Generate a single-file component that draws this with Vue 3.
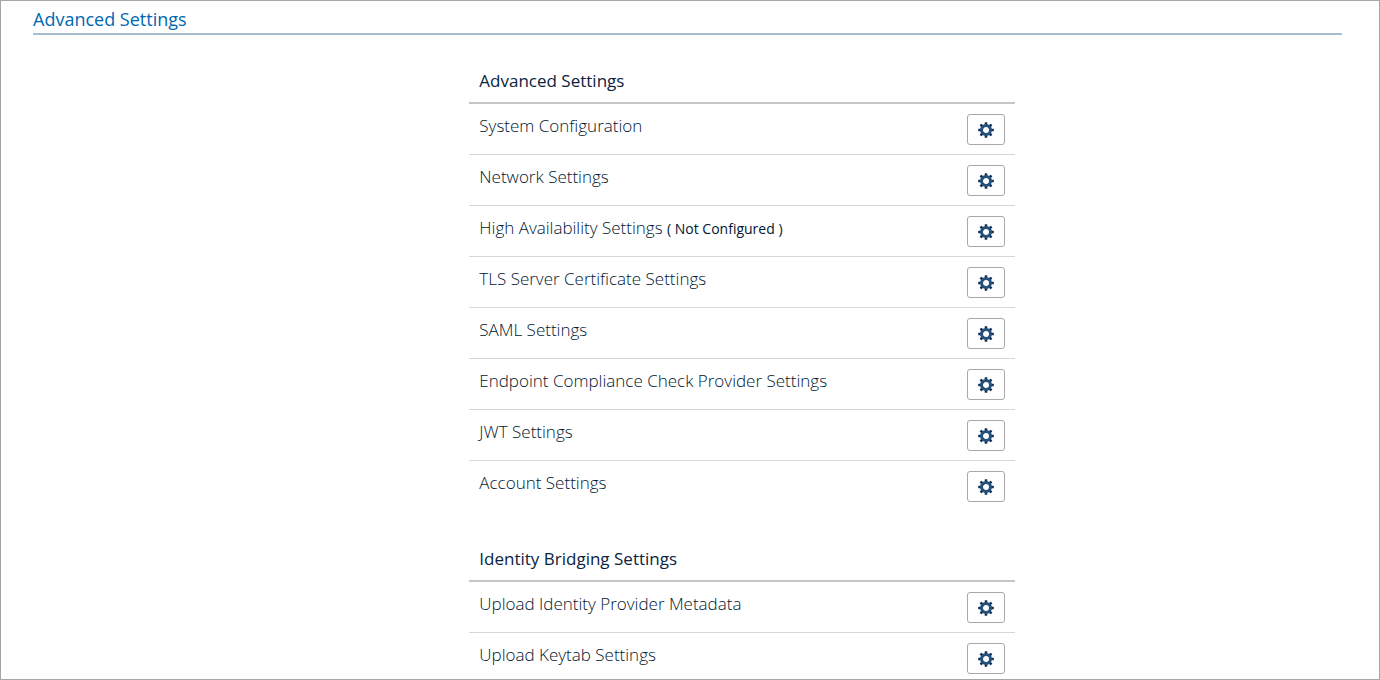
<script setup>
const groups = [
  {
    title: 'Advanced Settings',
    items: [
      { name: 'System Configuration' },
      { name: 'Network Settings' },
      { name: 'High Availability Settings', note: '( Not Configured )' },
      { name: 'TLS Server Certificate Settings' },
      { name: 'SAML Settings' },
      { name: 'Endpoint Compliance Check Provider Settings' },
      { name: 'JWT Settings' },
      { name: 'Account Settings' },
    ],
  },
  {
    title: 'Identity Bridging Settings',
    items: [{ name: 'Upload Identity Provider Metadata' }, { name: 'Upload Keytab Settings' }],
  },
]
const teeth = [0, 45, 90, 135, 180, 225, 270, 315]
</script>

<template>
  <main class="page">
    <h1 class="page-title">Advanced Settings</h1>
    <div class="content">
      <section v-for="group in groups" :key="group.title" class="group">
        <h2 class="group-title">{{ group.title }}</h2>
        <ul class="list">
          <li v-for="item in group.items" :key="item.name" class="row">
            <span class="name">{{ item.name }} <span v-if="item.note" class="note">{{ item.note }}</span></span>
            <button type="button" class="gear" :aria-label="item.name">
              <svg viewBox="0 0 16 16" width="16" height="16" aria-hidden="true">
                <rect v-for="a in teeth" :key="a" x="6.7" y="0.2" width="2.6" height="3.4" rx="0.5" :transform="`rotate(${a} 8 8)`" fill="#12304f" />
                <circle cx="8" cy="8" r="4.5" fill="none" stroke="#24517c" stroke-width="3" />
              </svg>
            </button>
          </li>
        </ul>
      </section>
    </div>
  </main>
</template>

<style>
body {
  background: #fff;
}
</style>

<style scoped>
.page {
  box-sizing: border-box;
  height: 100vh;
  overflow: hidden;
  padding: 0 37px 0 32px;
  border: 1px solid #a6a6a6;
  font-family: "Open Sans", "Noto Sans", sans-serif;
  color: #0a2340;
}
.page-title {
  margin: 0;
  padding: 6px 0 1px;
  border-bottom: 2px solid #a9bccb;
  font-size: 18px;
  line-height: 25px;
  font-weight: 400;
  color: #0068b3;
}
.content {
  width: calc(100% * 5 / 12);
  margin: 35px 0 0 calc(100% / 3);
}
.group {
  margin-bottom: 37px;
}
.group-title {
  margin: 0;
  padding: 0 10px 10px;
  border-bottom: 2px solid #c4c6c8;
  font-size: 17px;
  line-height: 22px;
  font-weight: 400;
}
.list {
  margin: 0;
  padding: 0;
  list-style: none;
}
.row {
  display: flex;
  justify-content: space-between;
  align-items: flex-start;
  padding: 10px 10px 9px;
}
.row + .row {
  border-top: 1px solid #d6d6d6;
}
.name {
  font-size: 17px;
  line-height: 24px;
  font-weight: 300;
  color: #001730;
}
.note {
  font-size: 14px;
  font-weight: 400;
}
.gear {
  display: flex;
  flex-shrink: 0;
  align-items: center;
  justify-content: center;
  width: 38px;
  height: 31px;
  padding: 0;
  border: 1px solid #a8a8a8;
  border-radius: 3px;
  background: #fff;
}
</style>
